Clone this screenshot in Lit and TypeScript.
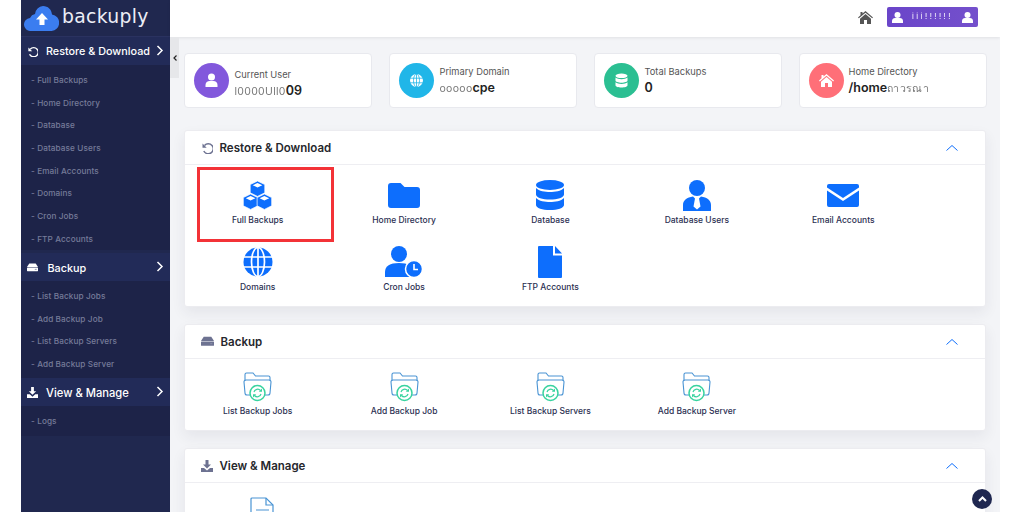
import { LitElement, html, css, svg } from "lit";
import { customElement } from "lit/decorators.js";

const B = "#0d6efd";
const cube = (cx: number, y: number) => svg`<path fill="${B}" stroke="#fff" stroke-width=".7" d="M${cx} ${y}l7.300 3.600v8.200l-7.300 3.600-7.300-3.600V${y + 3.6}z"/><path fill="#fff" d="M${cx} ${y + 2}l4.800 2.200-4.800 2.200-4.800-2.200z"/>`;
const cubes = svg`${cube(14.5, 0)}${cube(7.6, 13)}${cube(21.4, 13)}`;
const folder = svg`<path fill="${B}" d="M3 0h9.500l4 4H29a3 3 0 0 1 3 3v15a3 3 0 0 1-3 3H3a3 3 0 0 1-3-3V3a3 3 0 0 1 3-3z"/>`;
const db = svg`<ellipse fill="${B}" cx="14" cy="5" rx="14" ry="5"/><path fill="${B}" d="M0 8c3 3.200 9 4 14 4s11-.8 14-4v6.500c0 3-6.500 5-14 5s-14-2-14-5z"/><path fill="${B}" d="M0 18c3 3.200 9 4 14 4s11-.8 14-4v7c0 3-6.500 5-14 5S0 28 0 25z"/>`;
const dbUser = svg`<circle fill="${B}" cx="14" cy="8" r="8"/><path fill="${B}" d="M0 31v-6c0-5 4-7.500 10-8.500l2 2-1.500 8 3.500 3 3.500-3-1.500-8 2-2c6 1 10 3.500 10 8.500v6z"/>`;
const mail = svg`<path fill="${B}" d="M2 0h28a2 2 0 0 1 2 2v1.500L16 14 0 3.500V2a2 2 0 0 1 2-2z"/><path fill="${B}" d="M0 6.500L16 17 32 6.500V21a2 2 0 0 1-2 2H2a2 2 0 0 1-2-2z"/>`;
const globe = svg`<circle cx="15" cy="15" r="14.500" fill="${B}"/><g fill="none" stroke="#fff" stroke-width="1.700"><ellipse cx="15" cy="15" rx="6.500" ry="14.500"/><path d="M15 0v30M.5 10h29M.5 20h29"/></g>`;
const cron = svg`<circle fill="${B}" cx="14" cy="8" r="8"/><path fill="${B}" d="M0 31v-5c0-6 5-9 14-9s14 3 14 9v5z"/><circle fill="${B}" stroke="#fff" stroke-width="1.500" cx="29" cy="23" r="8.500"/><path fill="none" stroke="#fff" stroke-width="1.600" d="M29 18v5.500h4"/>`;
const file = svg`<path fill="${B}" d="M1 0h14v9.500h9V31a1 1 0 0 1-1 1H1a1 1 0 0 1-1-1V1a1 1 0 0 1 1-1z"/><path fill="${B}" d="M17 0l7 7.500h-7z"/>`;
const backupFolder = svg`<g fill="none" stroke="#4a94d4" stroke-width="1.100"><path d="M2 9V2.500A1.500 1.500 0 0 1 3.500 1H10l2.500 3h13A1.500 1.500 0 0 1 27 5.500V9"/><path d="M3 8h23a2 2 0 0 1 2 2l-1 11a2 2 0 0 1-2 2H4a2 2 0 0 1-2-2L1 10a2 2 0 0 1 2-2z"/></g><circle cx="14.500" cy="21" r="7.500" fill="#fff" stroke="#38d39f" stroke-width="1.500"/><g fill="none" stroke="#38d39f" stroke-width="1.200"><path d="M11 20a3.800 3.800 0 0 1 6.500-1.500"/><path d="M18 22a3.800 3.800 0 0 1-6.500 1.500"/></g><path fill="#38d39f" d="M19 16.500v3.200h-3.200zM10 25.500v-3.200h3.200z"/>`;

const undo = svg`<path fill="none" stroke="currentColor" stroke-width="1.500" d="M3.500 3.500A5 5 0 1 1 2.800 9"/><path fill="currentColor" d="M1.500 1.500v4.200h4.200z"/>`;
const hdd = svg`<path fill="currentColor" d="M2.500 1.500h7l2.500 4H0z"/><path fill="currentColor" d="M.5 6h11a.5.5 0 0 1 .5.5v3a.5.5 0 0 1-.5.5H.5a.5.5 0 0 1-.5-.5v-3A.5.5 0 0 1 .500 6z"/><path fill="#888da8" d="M8.500 7.500h2v1h-2z"/>`;
const dl = svg`<path fill="currentColor" d="M4.500 0h3v4.500H10L6 8.500 2 4.500h2.500z"/><path fill="currentColor" d="M0 8h3l3 2.500L9 8h3v4H0z"/>`;
const chev = svg`<path fill="none" stroke="currentColor" stroke-width="1.500" d="M1.500 1l4.500 4.500L1.500 10"/>`;
const up = svg`<path fill="none" stroke="${B}" stroke-width="1" d="M.5 6.500l5.500-5 5.500 5"/>`;

const sideIcon = (p: unknown) => html`<svg class="si" viewBox="0 0 12 12">${p}</svg>`;
const nav = [
  { t: "Restore & Download", i: undo, k: "restore", s: ["Full Backups", "Home Directory", "Database", "Database Users", "Email Accounts", "Domains", "Cron Jobs", "FTP Accounts"] },
  { t: "Backup", i: hdd, k: "backup", s: ["List Backup Jobs", "Add Backup Job", "List Backup Servers", "Add Backup Server"] },
  { t: "View & Manage", i: dl, k: "view", s: ["Logs"] },
];
const restore = [
  ["Full Backups", cubes, 29, 29], ["Home Directory", folder, 32, 25], ["Database", db, 28, 30], ["Database Users", dbUser, 28, 31], ["Email Accounts", mail, 32, 23],
  ["Domains", globe, 30, 30], ["Cron Jobs", cron, 38, 32], ["FTP Accounts", file, 24, 32],
] as const;
const backup = ["List Backup Jobs", "Add Backup Job", "List Backup Servers", "Add Backup Server"];

@customElement("app-root")
export class AppRoot extends LitElement {
  static styles = css`
    :host { display: block; width: 1024px; height: 512px; background: #fff; overflow: hidden; font-family: Inter, "Open Sans", sans-serif; }
    .frame { display: flex; width: 979px; height: 512px; margin-left: 21px; position: relative; overflow: hidden; background: #f3f4f7; }
    .side { width: 149px; flex: none; background: #20284f; color: #fff; display: flex; flex-direction: column; }
    .logo { height: 37px; width: 150px; flex: none; display: flex; align-items: center; gap: 3px; padding-left: 3px; box-sizing: border-box; border-bottom: 1px solid #2a3260; background: #20284f; }
    .logo svg { width: 35px; height: 25px; flex: none; }
    .logo span { font: 400 18.800px/1 "DejaVu Sans", sans-serif; letter-spacing: .3px; color: #eceef6; margin-top: -1px; }
    .head { height: 28px; display: flex; align-items: center; background: #222b58; padding-left: 6px; font-size: 10.800px; font-weight: 500; flex: none; position: relative; }
    .head.backup { margin-top: 3px; }
    .si { width: 11px; height: 11px; flex: none; color: #fff; }
    .head .lbl { margin-left: 8px; }
    .head.backup .lbl { margin-left: 9.500px; margin-top: 2px; }
    .head.view .lbl { margin-left: 8px; font-size: 11.200px; margin-top: 2px; }
    .chev { width: 8px; height: 11px; position: absolute; right: 6px; top: 8px; color: #fff; }
    .subs { background: #1d2348; padding: 3.500px 0 0; flex: none; }
    .subs.backup { padding-bottom: 3px; }
    .subs.view { padding-bottom: 4px; }
    .sub { height: 22.700px; display: flex; align-items: center; padding-left: 10px; font-size: 8.200px; font-weight: 500; color: #767b99; letter-spacing: .1px; white-space: nowrap; }
    .main { flex: 1; min-width: 0; display: flex; flex-direction: column; position: relative; }
    .top { height: 37px; box-sizing: border-box; flex: none; background: #fff; box-shadow: 0 1px 3px rgba(0,0,0,.08); display: flex; align-items: center; justify-content: flex-end; padding: 0 22px 3px 0; gap: 14px; position: relative; }
    .top .home { width: 15px; height: 13px; color: #555; }
    .userbtn { width: 91px; height: 20px; border-radius: 2px; background: linear-gradient(90deg, #6a45c9, #7450cc); display: flex; align-items: center; justify-content: space-between; padding: 0 5px; box-sizing: border-box; color: #fff; }
    .userbtn svg { width: 11px; height: 11px; flex: none; }
    .userbtn span { font-size: 7.500px; line-height: 8px; letter-spacing: 2.500px; filter: blur(.7px); white-space: nowrap; }
    .content { padding: 16px 0 0 13.500px; display: flex; flex-direction: column; }
    .stats { display: grid; grid-template-columns: repeat(4, 188px); column-gap: 17px; }
    .stat { height: 55px; background: #fff; border: 1px solid #e8e9ee; border-radius: 4px; box-sizing: border-box; display: flex; align-items: center; padding-left: 9px; gap: 6px; }
    .stat.c4 { gap: 5px; }
    .circle { width: 35px; height: 35px; border-radius: 50%; flex: none; display: flex; align-items: center; justify-content: center; }
    .circle svg { width: 15px; height: 15px; }
    .c-user { background: #8258dc; }
    .c-globe { background: #20b6e8; }
    .c-db { background: #2bbf92; }
    .c-home { background: #ff6f78; }
    .st { display: flex; flex-direction: column; gap: 2px; margin-top: 0; }
    .st.low { margin-top: 6px; }
    .st .l { font-size: 9.300px; line-height: 12px; color: #555; white-space: nowrap; }
    .st .v { font-size: 12.500px; line-height: 15px; font-weight: 600; color: #222; white-space: nowrap; }
    .st .v i { font-style: normal; font-weight: 400; font-size: 10.500px; color: #777; filter: blur(.4px); display: inline-block; letter-spacing: .3px; }
    .sec { background: #fff; border-radius: 3px; border: 1px solid #ececf0; box-sizing: border-box; width: 802px; margin-top: 17px; box-shadow: 0 6px 14px rgba(40,44,70,.07); }
    .sec.first { margin-top: 22px; }
    .sh { height: 34px; border-bottom: 1.500px solid #eeeef2; box-sizing: border-box; display: flex; align-items: center; padding-left: 16px; position: relative; }
    .sh svg.ic { width: 12px; height: 12px; color: #6d7291; flex: none; }
    .sh .t { margin-left: 7px; font-size: 11.500px; font-weight: 600; color: #26272c; }
    .sh.b .ic { width: 13px; height: 13px; }
    .sh .up { width: 12px; height: 8px; position: absolute; right: 27px; top: 13px; }
    .grid { display: grid; grid-template-columns: repeat(5, 146.400px); row-gap: 19px; padding: 14px 0 12px; }
    .grid.b { padding: 12px 0 12px; }
    .item { display: flex; flex-direction: column; align-items: center; }
    .ib { height: 32px; display: flex; align-items: center; justify-content: center; }
    .lab { font-size: 8.500px; line-height: 14px; margin-top: 2px; font-weight: 500; color: #2b2f52; white-space: nowrap; }
    .grid.b .lab { margin-top: 1px; }
    .logsic { width: 24px; height: 30px; }
    .logs { height: 40px; padding: 14px 0 0 65px; overflow: hidden; }
    .red { position: absolute; left: 27px; top: 167px; width: 137px; height: 75px; border: 3px solid #f33237; box-sizing: border-box; }
    .handle { position: absolute; left: 149px; top: 37px; width: 9px; height: 41px; background: #e6e7ea; display: flex; align-items: center; justify-content: center; }
    .handle svg { width: 4px; height: 6px; }
    .totop { position: absolute; right: 8px; bottom: 3px; width: 20px; height: 20px; border-radius: 50%; background: #1f2750; display: flex; align-items: center; justify-content: center; }
    .totop svg { width: 9px; height: 6px; }
  `;

  private sh(i: unknown, t: string, b = false) {
    return html`<div class="sh ${b ? "b" : ""}"><svg class="ic" viewBox="0 0 12 12">${i}</svg><span class="t">${t}</span><svg class="up" viewBox="0 0 12 8">${up}</svg></div>`;
  }

  render() {
    return html`<div class="frame">
      <aside class="side">
        <div class="logo">
          <svg viewBox="0 0 35 25"><path fill="#3b7df0" d="M7 25a6.500 6.500 0 0 1-1-13 7 7 0 0 1 5-4A9 9 0 0 1 19 0c5 0 8.500 3.500 9 8.500a8.300 8.300 0 0 1-.5 16.500z"/><path fill="#fff" d="M18 7l6 6.500h-3.500V19h-5v-5.500H12z"/></svg>
          <span>backuply</span>
        </div>
        ${nav.map(n => html`
          <div class="head ${n.k}">${sideIcon(n.i)}<span class="lbl">${n.t}</span><svg class="chev" viewBox="0 0 8 11">${chev}</svg></div>
          <div class="subs ${n.k}">${n.s.map(s => html`<div class="sub">- ${s}</div>`)}</div>`)}
      </aside>
      <div class="main">
        <div class="top">
          <svg class="home" viewBox="0 0 15 13"><path fill="currentColor" d="M7.500 0L15 6.500l-.8.800L7.500 1.700.8 7.300 0 6.500 2.500 4.300V1h2v1.600z"/><path fill="currentColor" d="M7.500 3L13 7.700V13H9V9H6v4H2V7.700z"/></svg>
          <div class="userbtn">
            <svg viewBox="0 0 11 11"><circle cx="5.500" cy="3" r="3" fill="#fff"/><path fill="#fff" d="M0 11V9c0-2 1.500-3 3-3h5c1.500 0 3 1 3 3v2z"/></svg>
            <span>iii!!!!!!</span>
            <svg viewBox="0 0 11 11"><circle cx="5.500" cy="3" r="3" fill="#fff"/><path fill="#fff" d="M0 11V9c0-2 1.500-3 3-3h5c1.500 0 3 1 3 3v2z"/></svg>
          </div>
        </div>
        <div class="content">
          <div class="stats">
            <div class="stat c1">
              <div class="circle c-user"><svg viewBox="0 0 15 15"><circle cx="7.500" cy="4" r="3.500" fill="#fff"/><path fill="#fff" d="M1.500 14v-2c0-2.500 2-4 4-4h4c2 0 4 1.500 4 4v2z"/></svg></div>
              <div class="st low"><span class="l">Current User</span><span class="v"><i>l0000Ull0</i>09</span></div>
            </div>
            <div class="stat c2">
              <div class="circle c-globe"><svg viewBox="0 0 15 15"><circle cx="7.500" cy="7.500" r="6.500" fill="#fff"/><g fill="none" stroke="#20b6e8" stroke-width=".8"><ellipse cx="7.500" cy="7.500" rx="3" ry="6.500"/><path d="M7.500 1v13M1 5.200h13M1 9.800h13"/></g></svg></div>
              <div class="st"><span class="l">Primary Domain</span><span class="v"><i>ooooo</i>cpe</span></div>
            </div>
            <div class="stat c3">
              <div class="circle c-db"><svg viewBox="0 0 15 15"><ellipse cx="7.500" cy="2.800" rx="6" ry="2.300" fill="#fff"/><path fill="#fff" d="M1.500 4.500c1.500 1.300 3.500 1.700 6 1.700s4.500-.4 6-1.700v3c0 1.300-2.700 2.200-6 2.200s-6-.9-6-2.200z"/><path fill="#fff" d="M1.500 9.300c1.500 1.300 3.500 1.700 6 1.700s4.500-.4 6-1.700v2.900c0 1.300-2.700 2.300-6 2.300s-6-1-6-2.300z"/></svg></div>
              <div class="st"><span class="l">Total Backups</span><span class="v">0</span></div>
            </div>
            <div class="stat c4">
              <div class="circle c-home"><svg viewBox="0 0 15 15"><path fill="#fff" d="M7.500 1L15 7.500l-.8.900-6.700-5.700L.8 8.400 0 7.500 2.500 5.300V2h2v1.600z"/><path fill="#fff" d="M7.500 4L13 8.700V14H9v-4H6v4H2V8.700z"/></svg></div>
              <div class="st"><span class="l">Home Directory</span><span class="v">/home<i>ถาวรณา</i></span></div>
            </div>
          </div>

          <section class="sec first">
            ${this.sh(undo, "Restore & Download")}
            <div class="grid">
              ${restore.map(([t, p, w, h]) => html`<div class="item"><div class="ib"><svg width=${w} height=${h} viewBox="0 0 ${w} ${h}">${p}</svg></div><div class="lab">${t}</div></div>`)}
            </div>
          </section>

          <section class="sec">
            ${this.sh(hdd, "Backup", true)}
            <div class="grid b">
              ${backup.map(t => html`<div class="item"><div class="ib"><svg width="29" height="30" viewBox="0 0 29 30">${backupFolder}</svg></div><div class="lab">${t}</div></div>`)}
            </div>
          </section>

          <section class="sec">
            ${this.sh(dl, "View & Manage")}
            <div class="logs"><svg class="logsic" viewBox="0 0 24 30"><path fill="none" stroke="#4a94d4" stroke-width="1.200" d="M1 28V2a1 1 0 0 1 1-1h14l7 7v20"/><path fill="none" stroke="#4a94d4" stroke-width="1.200" d="M16 1v7h7M6 13h13"/><circle cx="3" cy="18" r="3" fill="#f5a94a"/></svg></div>
          </section>
        </div>
        <div class="red"></div>
        <div class="totop"><svg viewBox="0 0 9 6"><path fill="none" stroke="#fff" stroke-width="2" d="M1 5l3.500-3.500L8 5"/></svg></div>
      </div>
      <div class="handle"><svg viewBox="0 0 4 6"><path fill="none" stroke="#222" stroke-width="1.200" d="M3.500.5L1 3l2.500 2.500"/></svg></div>
    </div>`;
  }
}
